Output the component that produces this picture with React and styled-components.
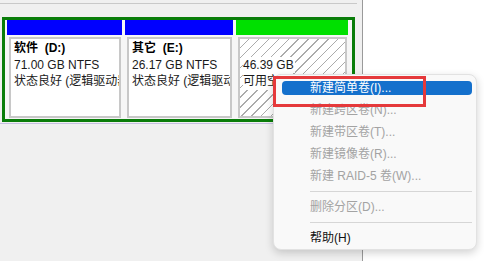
import styled, { createGlobalStyle } from "styled-components";

const GlobalStyle = createGlobalStyle`
  html, body {
    margin: 0;
    padding: 0;
    background: #ffffff;
  }
  body {
    font-family: "Liberation Sans", "Noto Sans CJK SC", sans-serif;
  }
`;

const volumes = [
  { name: "软件  (D:)", size: "71.00 GB NTFS", status: "状态良好 (逻辑驱动器)", width: 115, color: "#0000ff" },
  { name: "其它  (E:)", size: "26.17 GB NTFS", status: "状态良好 (逻辑驱动器)", width: 108, color: "#0000ff" },
  { name: "", size: "46.39 GB", status: "可用空间", width: 112, color: "#00e000", free: true },
];

const menuItems = [
  { label: "新建简单卷(I)...", active: true },
  { label: "新建跨区卷(N)...", disabled: true },
  { label: "新建带区卷(T)...", disabled: true },
  { label: "新建镜像卷(R)...", disabled: true },
  { label: "新建 RAID-5 卷(W)...", disabled: true },
  { sep: true },
  { label: "删除分区(D)...", disabled: true },
  { sep: true },
  { label: "帮助(H)" },
];

export default function App() {
  return (
    <>
      <GlobalStyle />
      <Screen>
        <LeftPane>
          <TopStrip />
          <DiskFrame>
            {volumes.map((v, i) => (
              <Column key={i} $width={v.width}>
                <Header $color={v.color} />
                <Body $free={v.free}>
                  <Name>{v.name || "\u00a0"}</Name>
                  <Line $free={v.free}>{v.size}</Line>
                  <Line $free={v.free}>{v.status}</Line>
                </Body>
              </Column>
            ))}
          </DiskFrame>
          <Divider />
        </LeftPane>
        <RightPane />
        <Menu>
          {menuItems.map((m, i) =>
            m.sep ? (
              <Separator key={i} />
            ) : (
              <Item key={i} $active={m.active} $disabled={m.disabled}>
                {m.label}
              </Item>
            )
          )}
        </Menu>
        <Highlight />
      </Screen>
    </>
  );
}

const Screen = styled.div`
  position: relative;
  display: flex;
  width: 484px;
  height: 261px;
  overflow: hidden;
`;

const LeftPane = styled.div`
  width: 363px;
  height: 100%;
  background: #f0f0f0;
  border-right: 1px solid #9a9a9a;
  box-sizing: border-box;
`;

const TopStrip = styled.div`
  width: 357px;
  height: 3px;
  border-bottom: 1px solid #c9c9c9;
`;

const DiskFrame = styled.div`
  margin: 13px 0 0 2px;
  width: 353px;
  height: 105px;
  box-sizing: border-box;
  border: 3px solid #0a7d0a;
  background: #f6f6f6;
  display: flex;
  gap: 3px;
  padding-left: 2px;
`;

const Column = styled.div`
  width: ${(p) => p.$width}px;
  display: flex;
  flex-direction: column;
`;

const Header = styled.div`
  height: 15px;
  background: ${(p) => p.$color};
`;

const Body = styled.div`
  flex: 1;
  margin: 2px 1px 1px 2px;
  border: 2px solid #c8c8c8;
  padding: 1px 3px 0;
  overflow: hidden;
  background: ${(p) =>
    p.$free
      ? "repeating-linear-gradient(135deg, #ffffff 0px, #ffffff 6px, #ababab 6px, #ababab 7px)"
      : "#ffffff"};
`;

const Line = styled.div`
  font-size: 12px;
  line-height: 16.5px;
  color: #1a1a1a;
  white-space: pre;
  ${(p) => (p.$free ? "width: max-content; background: #ffffff; padding-right: 1px;" : "")}
`;

const Name = styled(Line)`
  font-weight: bold;
  color: #000;
`;

const Divider = styled.div`
  margin-top: 1px;
  height: 1px;
  background: #c6c0e2;
`;

const RightPane = styled.div`
  flex: 1;
  background: #ffffff;
`;

const Menu = styled.div`
  position: absolute;
  left: 273px;
  top: 74px;
  width: 204px;
  height: 176px;
  box-sizing: border-box;
  padding-top: 2px;
  display: flex;
  flex-direction: column;
  background: #f9f9f9;
  border: 1px solid #e2e2e2;
  border-radius: 8px;
  box-shadow: 0 3px 9px rgba(0, 0, 0, 0.18);
`;

const Item = styled.div`
  flex: none;
  height: 14px;
  margin: 4px 4px 4px 8px;
  padding-left: 28px;
  border-radius: 4px;
  font-size: 12px;
  line-height: 14px;
  white-space: nowrap;
  color: ${(p) => (p.$active ? "#ffffff" : p.$disabled ? "#a3a3a3" : "#111111")};
  background: ${(p) => (p.$active ? "#1470cc" : "transparent")};
`;

const Separator = styled.div`
  flex: none;
  height: 1px;
  margin: 4px 4px 4px 36px;
  background: #d6d6d6;
`;

const Highlight = styled.div`
  position: absolute;
  left: 273px;
  top: 76px;
  width: 153px;
  height: 31px;
  box-sizing: border-box;
  border: 3px solid #e5393b;
`;
